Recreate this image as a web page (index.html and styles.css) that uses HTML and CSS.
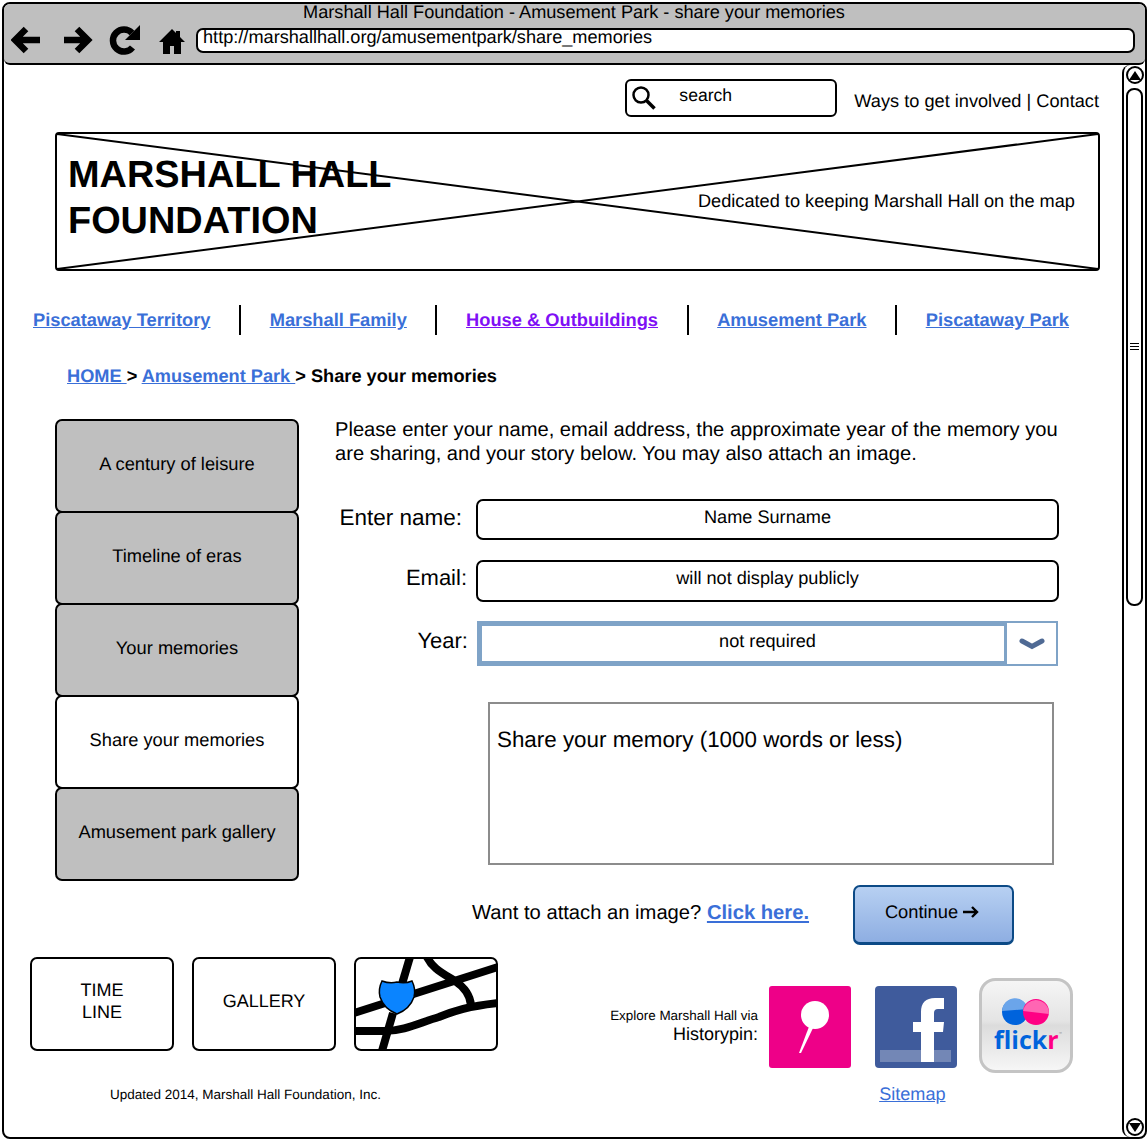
FILE: index.html
```html
<!DOCTYPE html>
<html lang="en">
<head>
<meta charset="utf-8">
<title>Marshall Hall Foundation - Amusement Park - share your memories</title>
<link rel="stylesheet" href="styles.css">
</head>
<body>
<div class="window">
  <header class="chrome">
    <div class="chrome-title">Marshall Hall Foundation - Amusement Park - share your memories</div>
    <div class="toolbar">
      <svg class="tool tool-back" viewBox="0 0 30 28"><path d="M29 14H6M15 3 4 14l11 11" fill="none" stroke="#000" stroke-width="6.5" stroke-linejoin="miter"/></svg>
      <svg class="tool tool-forward" viewBox="0 0 30 28"><path d="M1 14h22M14 3l11 11-11 11" fill="none" stroke="#000" stroke-width="6.5"/></svg>
      <svg class="tool tool-reload" viewBox="0 0 32 30"><path d="M24.5 22.5A11 11 0 1 1 24 8" fill="none" stroke="#000" stroke-width="6.5"/><path d="M32 0v15H17z"/></svg>
      <svg class="tool tool-home" viewBox="0 0 26 25"><path d="M13 0 0 13h4v12h7v-8h4v8h7V13h4l-5-5V2h-4v2z"/></svg>
      <div class="address">http://marshallhall.org/amusementpark/share_memories</div>
    </div>
  </header>

  <div class="viewport">
    <main class="page">
      <div class="utility">
        <div class="search">
          <svg class="search-icon" viewBox="0 0 26 26"><circle cx="10" cy="10" r="7.5" fill="none" stroke="#000" stroke-width="2.5"/><path d="m15.5 15.5 8 8" stroke="#000" stroke-width="3.5"/></svg>
          <span>search</span>
        </div>
        <div class="utility-links">Ways to get involved | Contact</div>
      </div>

      <section class="banner">
        <svg class="banner-cross" viewBox="0 0 100 100" preserveAspectRatio="none"><path d="M0 0 100 100M0 100 100 0" stroke="#000" stroke-width="2" vector-effect="non-scaling-stroke"/></svg>
        <h1>MARSHALL HALL<br>FOUNDATION</h1>
        <p>Dedicated to keeping Marshall Hall on the map</p>
      </section>

      <nav class="sections">
        <a href="#">Piscataway Territory</a>
        <a href="#">Marshall Family</a>
        <a href="#" class="visited">House &amp; Outbuildings</a>
        <a href="#">Amusement Park</a>
        <a href="#">Piscataway Park</a>
      </nav>

      <div class="crumbs"><a href="#">HOME </a>&gt; <a href="#">Amusement Park </a>&gt; Share your memories</div>

      <div class="columns">
        <aside class="side">
          <div class="side-item">A century of leisure</div>
          <div class="side-item">Timeline of eras</div>
          <div class="side-item">Your memories</div>
          <div class="side-item current">Share your memories</div>
          <div class="side-item">Amusement park gallery</div>
        </aside>

        <section class="form">
          <p class="intro">Please enter your name, email address, the approximate year of the memory you are sharing, and your story below. You may also attach an image.</p>
          <div class="field field-name">
            <label>Enter name:</label>
            <div class="input">Name Surname</div>
          </div>
          <div class="field field-email">
            <label>Email:</label>
            <div class="input">will not display publicly</div>
          </div>
          <div class="field field-year">
            <label>Year:</label>
            <div class="select">
              <div class="select-value">not required</div>
              <div class="select-button"><svg viewBox="0 0 26 12"><path d="M3 3 13 8.5 23 3" fill="none" stroke="#4f6a94" stroke-width="5" stroke-linecap="round"/></svg></div>
            </div>
          </div>
          <div class="story">Share your memory (1000 words or less)</div>
          <div class="attach">
            <span class="attach-text">Want to attach an image? <a href="#">Click here.</a></span>
            <button class="continue" type="button">Continue <svg viewBox="0 0 16 12"><path d="M0 6h13M9 1l5 5-5 5" fill="none" stroke="#000" stroke-width="2.4"/></svg></button>
          </div>
        </section>
      </div>

      <footer class="foot">
        <div class="foot-left">
          <div class="tiles">
            <div class="tile">TIME<br>LINE</div>
            <div class="tile tile-gallery">GALLERY</div>
            <div class="tile tile-map">
              <svg viewBox="0 0 144 94">
                <g fill="none" stroke="#000" stroke-width="8">
                  <path d="M0 56 144 10"/>
                  <path d="M56 0 48 27"/>
                  <path d="M72-2C78 12 90 17 101 24C110 30 116 38 117 48"/>
                  <path d="M0 74H30C50 74 65 66 85 60C100 54 115 49 144 46"/>
                  <path d="M39 56 28 94"/>
                </g>
                <path d="M28 24Q36 27 43 25Q51 27 58 24Q62 32 60 40Q56 52 43 57Q30 52 26 40Q24 32 28 24Z" fill="#0a84ff" stroke="#000" stroke-width="1.5"/>
              </svg>
            </div>
          </div>
          <div class="updated">Updated 2014, Marshall Hall Foundation, Inc.</div>
        </div>
        <div class="foot-right">
          <div class="social">
            <div class="via"><small>Explore Marshall Hall via</small><span>Historypin:</span></div>
            <svg class="badge" viewBox="0 0 82 82">
              <rect width="82" height="82" rx="3" fill="#ee0088"/>
              <circle cx="46" cy="29" r="14" fill="#fff"/>
              <path d="M41 38 45 40 32 67 30 67Z" fill="#fff"/>
            </svg>
            <svg class="badge badge-fb" viewBox="0 0 82 82">
              <rect width="82" height="82" rx="4" fill="#3f5b9c"/>
              <path d="M46 76V46H38V36H46V26Q46 12 60 12H69V23H63Q59 23 59 27V36H69L68 46H59V76Z" fill="#fff"/>
              <rect x="5" y="64" width="71" height="12" fill="#fff" fill-opacity=".27"/>
            </svg>
            <svg class="badge-flickr" viewBox="0 0 94 95">
              <defs>
                <linearGradient id="flickr-face" x1="0" y1="0" x2="0" y2="1">
                  <stop offset="0" stop-color="#f6f6f6"/><stop offset=".45" stop-color="#e4e4e4"/><stop offset=".5" stop-color="#dcdcdc"/><stop offset="1" stop-color="#f7f7f7"/>
                </linearGradient>
              </defs>
              <rect x="1.5" y="1.5" width="91" height="92" rx="15" fill="url(#flickr-face)" stroke="#c4c4c4" stroke-width="3"/>
              <circle cx="36" cy="34" r="13" fill="#0063dc"/>
              <path d="M23.1 33A13 13 0 0 1 48.9 31Z" fill="#6ba5ea"/>
              <circle cx="57" cy="34" r="13" fill="#ff0084"/>
              <path d="M44.1 33A13 13 0 0 1 69.9 36Z" fill="#ff66b3"/>
              <text class="flickr-word" x="15" y="71">flick<tspan class="flickr-r">r</tspan><tspan class="flickr-tm" dy="-14">™</tspan></text>
            </svg>
          </div>
          <a class="sitemap" href="#">Sitemap</a>
        </div>
      </footer>
    </main>

    <div class="scrollbar">
      <div class="scroll-btn"><span class="tri-up"></span></div>
      <div class="scroll-thumb"><span class="grip"></span></div>
      <div class="scroll-btn scroll-btn-end"><span class="tri-down"></span></div>
    </div>
  </div>
</div>
</body>
</html>
```

FILE: styles.css
```css
* { box-sizing: border-box; }

html, body { margin: 0; padding: 0; background: #fff; }

body {
  width: 1148px;
  height: 1139px;
  overflow: hidden;
  font-family: "Liberation Sans", Arial, sans-serif;
  color: #000;
  text-rendering: geometricPrecision;
}

a { color: #3a6fd8; }

.window {
  margin-left: 2px;
  margin-top: 2px;
  width: 1145px;
  height: 1137px;
  border: 2px solid #000;
  border-radius: 8px;
  display: flex;
  flex-direction: column;
  overflow: hidden;
}

/* browser frame */
.chrome {
  height: 61px;
  flex: none;
  background: #bfbfbf;
  border-bottom: 2px solid #000;
  border-radius: 0 0 6px 6px;
}

.chrome-title {
  height: 21px;
  font-size: 18.17px;
  line-height: 16px;
  text-align: center;
  margin-left: -1px;
}

.toolbar {
  display: flex;
  align-items: center;
  height: 30px;
  padding-left: 7px;
}

.tool { flex: none; display: block; }
.tool-back { width: 30px; height: 28px; }
.tool-forward { width: 30px; height: 28px; margin-left: 22px; }
.tool-reload { width: 32px; height: 30px; margin-left: 15px; }
.tool-home { width: 26px; height: 25px; margin-left: 19px; margin-top: 2px; }

.address {
  margin-left: 11px;
  width: 939px;
  height: 25px;
  background: #fff;
  border: 2px solid #000;
  border-radius: 7px;
  font-size: 18.16px;
  line-height: 15px;
  padding-left: 5px;
  white-space: nowrap;
}

/* page area */
.viewport {
  flex: 1;
  display: flex;
  min-height: 0;
}

.page {
  width: 1118px;
  flex: none;
  padding-top: 14px;
}

.utility {
  display: flex;
  justify-content: flex-end;
  gap: 17px;
  height: 38px;
  padding-right: 23px;
}

.search {
  width: 212px;
  height: 38px;
  border: 2px solid #000;
  border-radius: 6px;
  display: flex;
  align-items: center;
  font-size: 17.6px;
  padding-bottom: 5px;
  padding-left: 4px;
}

.search-icon { width: 26px; height: 26px; margin-top: 5px; margin-right: 22px; }

.utility-links {
  font-size: 18.2px;
  line-height: 44px;
  white-space: nowrap;
}

/* foundation banner */
.banner {
  position: relative;
  margin: 15px 22px 0 51px;
  height: 139px;
  border: 2px solid #000;
  border-radius: 4px;
  display: flex;
  justify-content: space-between;
  align-items: center;
  padding: 0 23px 0 11px;
}

.banner-cross {
  position: absolute;
  inset: 0;
  width: 100%;
  height: 100%;
}

.banner h1 {
  position: relative;
  margin: 0;
  font-size: 37.9px;
  line-height: 46px;
  font-weight: 700;
  padding-bottom: 7px;
}

.banner p {
  position: relative;
  margin: 0;
  font-size: 18.2px;
}

/* section links */
.sections {
  display: flex;
  align-items: center;
  margin-top: 34px;
  padding-left: 29px;
  height: 30px;
  font-size: 18.3px;
  font-weight: 700;
  white-space: nowrap;
}

.sections a {
  flex: none;
  padding-right: 28.6px;
  margin-right: 28.6px;
  line-height: 30px;
  border-right: 2px solid #000;
}

.sections a:last-child { border-right: 0; margin-right: 0; padding-right: 0; }
.sections .visited { color: #7f10f5; }

.crumbs {
  margin: 30px 0 0 63px;
  height: 22px;
  line-height: 22px;
  font-size: 18.2px;
  font-weight: 700;
}

/* two columns */
.columns {
  display: flex;
  margin-top: 32px;
  margin-left: 51px;
}

.side {
  width: 244px;
  flex: none;
}

.side-item {
  height: 94px;
  margin-bottom: -2px;
  background: #bfbfbf;
  border: 2px solid #000;
  border-radius: 7px;
  display: flex;
  align-items: center;
  justify-content: center;
  font-size: 18.3px;
  padding-bottom: 4px;
}

.side-item.current { background: #fff; }

.form {
  width: 760px;
  margin-left: 36px;
  margin-top: -1px;
}

.intro {
  margin: 0;
  font-size: 20.14px;
  line-height: 24px;
  width: 730px;
}

.field {
  display: flex;
  align-items: center;
}

.field label {
  width: 141px;
  font-size: 22px;
  text-align: right;
  flex: none;
  white-space: nowrap;
}

.field-name { margin-top: 33px; }
.field-name label { padding-right: 14px; margin-top: -4px; font-size: 22.5px; }
.field-email { margin-top: 20px; }
.field-email label { margin-top: -7px; padding-right: 9px; }
.field-year { margin-top: 19px; }
.field-year label { margin-top: -5px; padding-right: 8px; }

.input {
  width: 583px;
  height: 41px;
  border: 2px solid #000;
  border-radius: 7px;
  font-size: 18.15px;
  text-align: center;
  line-height: 32px;
}

.field-email .input { height: 42px; }

.select {
  display: flex;
  width: 581px;
  height: 45px;
  margin-left: 1px;
  border: 2px solid #7fa3c7;
}

.select-value {
  flex: 1;
  border: 3px solid #7fa3c7;
  font-size: 18.15px;
  text-align: center;
  line-height: 30px;
  padding-left: 49px;
}

.select-button {
  width: 49px;
  flex: none;
  display: flex;
  align-items: center;
  justify-content: center;
}

.select-button svg { width: 26px; height: 12px; display: block; }

.story {
  margin: 36px 0 0 153px;
  width: 566px;
  height: 163px;
  border: 2px solid #8c8c8c;
  font-size: 22.39px;
  padding: 23px 0 0 7px;
}

.attach {
  display: flex;
  align-items: center;
  margin: 20px 0 0 137px;
  font-size: 20.2px;
}

.attach-text { padding-bottom: 3px; }
.attach a { font-weight: 700; }

.continue {
  margin-left: 44px;
  width: 161px;
  height: 60px;
  border: 2px solid #0c4a86;
  border-bottom-width: 3px;
  border-radius: 7px;
  background: linear-gradient(#b7d0f2, #8eaee2);
  font-family: inherit;
  font-size: 18.3px;
  color: #000;
  padding: 0 3px 5px 0;
  text-rendering: inherit;
}

.continue svg { width: 16px; height: 12px; }

/* footer */
.foot {
  display: flex;
  justify-content: space-between;
  margin-top: 12px;
  padding: 0 49px 0 26px;
}

.tiles { display: flex; gap: 18px; }

.tile {
  width: 144px;
  height: 94px;
  border: 2px solid #000;
  border-radius: 7px;
  display: flex;
  align-items: center;
  justify-content: center;
  text-align: center;
  font-size: 18px;
  line-height: 22px;
  padding-bottom: 7px;
}

.tile-gallery { padding-bottom: 7px; }

.tile-map { padding: 0; overflow: hidden; }
.tile-map svg { width: 144px; height: 94px; flex: none; display: block; }

.updated {
  margin: 36px 0 0 80px;
  font-size: 13.5px;
  line-height: 16px;
}

.foot-right { margin-top: 21px; }

.social { display: flex; align-items: flex-start; }

.via {
  display: flex;
  flex-direction: column;
  align-items: flex-end;
  margin-top: 29px;
  margin-right: 11px;
  white-space: nowrap;
}

.via small { font-size: 13.45px; line-height: 17px; }
.via span { font-size: 18px; line-height: 21px; }

.badge { width: 82px; height: 82px; margin-top: 8px; flex: none; }
.badge-fb { margin-left: 24px; }
.badge-flickr { width: 94px; height: 95px; margin-left: 22px; flex: none; }

.flickr-word {
  font-family: "Open Sans", "Liberation Sans", sans-serif;
  font-size: 25px;
  font-weight: 700;
  fill: #0063dc;
}

.flickr-r { fill: #ff0084; }
.flickr-tm { font-size: 4px; fill: #777; }

.sitemap {
  display: block;
  font-size: 18.1px;
  margin: 11px 0 0 269px;
}

/* scrollbar */
.scrollbar {
  flex: 1;
  border: 2px solid #000;
  border-width: 0 0 0 2px;
  border-radius: 8px 0 0 8px;
  display: flex;
  flex-direction: column;
  align-items: center;
  padding-top: 1px;
}

.scroll-btn {
  width: 18px;
  height: 18px;
  flex: none;
  border: 2px solid #000;
  border-radius: 50%;
  display: flex;
  align-items: center;
  justify-content: center;
}

.scroll-btn-end { margin-top: auto; margin-bottom: 1px; }

.tri-up, .tri-down {
  width: 0;
  height: 0;
  border-left: 6px solid transparent;
  border-right: 6px solid transparent;
}

.tri-up { border-bottom: 9px solid #000; }
.tri-down { border-top: 9px solid #000; }

.scroll-thumb {
  width: 17px;
  height: 518px;
  margin-top: 4px;
  border: 2px solid #000;
  border-radius: 8px;
  display: flex;
  align-items: center;
  justify-content: center;
}

.grip {
  width: 9px;
  height: 9px;
  background: repeating-linear-gradient(#000 0 1px, #fff 1px 3px);
}
```
